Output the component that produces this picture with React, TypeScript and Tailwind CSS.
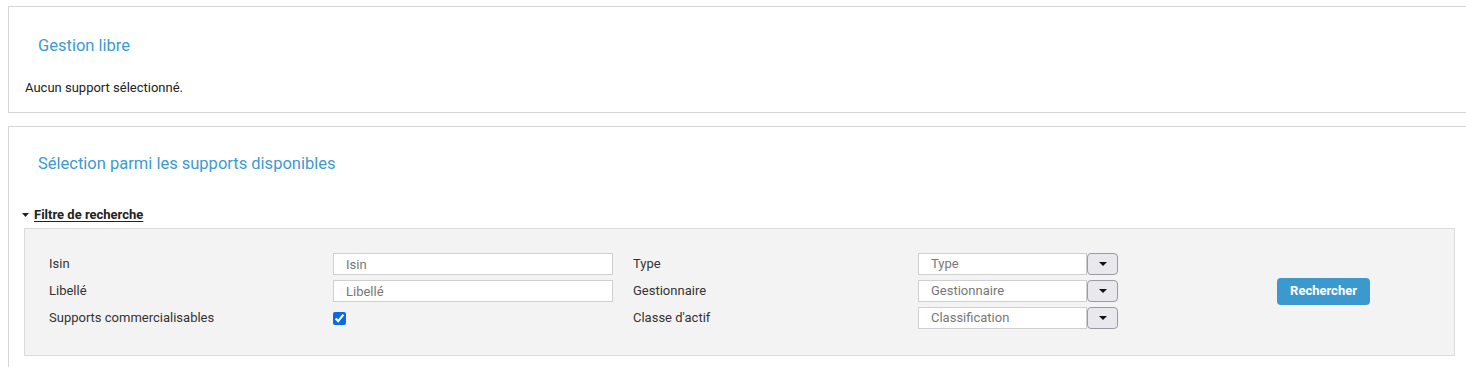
import React from "react";

const fields = [
  { label: "Isin", kind: "text", placeholder: "Isin" },
  { label: "Libellé", kind: "text", placeholder: "Libellé" },
  { label: "Supports commercialisables", kind: "check" },
];

const selects = [
  { label: "Type", placeholder: "Type" },
  { label: "Gestionnaire", placeholder: "Gestionnaire" },
  { label: "Classe d'actif", placeholder: "Classification" },
];

function Caret() {
  return (
    <svg width="8" height="4" viewBox="0 0 8 4" className="block">
      <path d="M0 0h8L4 4z" fill="#111" />
    </svg>
  );
}

function SelectBox({ placeholder }: { placeholder: string }) {
  return (
    <div className="flex h-[22px] w-[200px]">
      <div className="flex h-full w-[169px] items-center border border-[#cfcfcf] bg-white px-3 text-[13px] text-[#777]">
        {placeholder}
      </div>
      <button className="flex h-full w-[31px] items-center justify-center rounded-[4px] border border-[#9a9aa6] bg-[#e9e9ed]">
        <Caret />
      </button>
    </div>
  );
}

export default function App() {
  return (
    <div className="h-[367px] overflow-hidden bg-white pt-[6px] font-['Roboto',sans-serif] text-[#333]">
      <section className="ml-2 w-[1460px] border border-[#d6d6d6] px-4 pb-[16px]">
        <h2 className="mt-[29px] pl-[13px] text-[16.5px] leading-5 text-[#3d9ad1]">Gestion libre</h2>
        <p className="mt-[24px] text-[13px] leading-4 text-[#222]">Aucun support sélectionné.</p>
      </section>

      <section className="ml-2 mt-[13px] h-[242px] w-[1460px] border border-[#d6d6d6] pl-[15px]">
        <h2 className="mt-[27px] pl-[14px] text-[16.5px] leading-5 text-[#3d9ad1]">
          Sélection parmi les supports disponibles
        </h2>
        <div className="-ml-[2px] mt-[33px] flex items-center gap-[5px] text-[13px] leading-4">
          <svg width="7" height="4" viewBox="0 0 7 4">
            <path d="M0 0h7L3.5 4z" fill="#222" />
          </svg>
          <span className="font-bold text-[#222] underline underline-offset-2">Filtre de recherche</span>
        </div>
        <div className="mt-[5px] flex w-[1431px] items-center border border-[#dcdcdc] bg-[#f3f3f3] pb-[26px] pl-6 pt-[24px]">
          <div className="grid grid-cols-[284px_300px_285px_200px] gap-y-[5px] text-[13px]">
            {fields.map((f, i) => (
              <React.Fragment key={f.label}>
                <div className="flex h-[22px] items-center">{f.label}</div>
                <div className="flex h-[22px] items-center">
                  {f.kind === "text" ? (
                    <input
                      placeholder={f.placeholder}
                      className="h-[22px] w-[280px] border border-[#cfcfcf] bg-white px-3 text-[13px] placeholder:text-[#777]"
                    />
                  ) : (
                    <input type="checkbox" defaultChecked className="m-0 h-[13px] w-[13px] accent-[#0b68e6]" />
                  )}
                </div>
                <div className="flex h-[22px] items-center">{selects[i].label}</div>
                <SelectBox placeholder={selects[i].placeholder} />
              </React.Fragment>
            ))}
          </div>
          <button className="ml-[159px] h-[27px] w-[93px] rounded-[4px] bg-[#3c99cd] text-[13px] font-bold text-white">
            Rechercher
          </button>
        </div>
      </section>
    </div>
  );
}
